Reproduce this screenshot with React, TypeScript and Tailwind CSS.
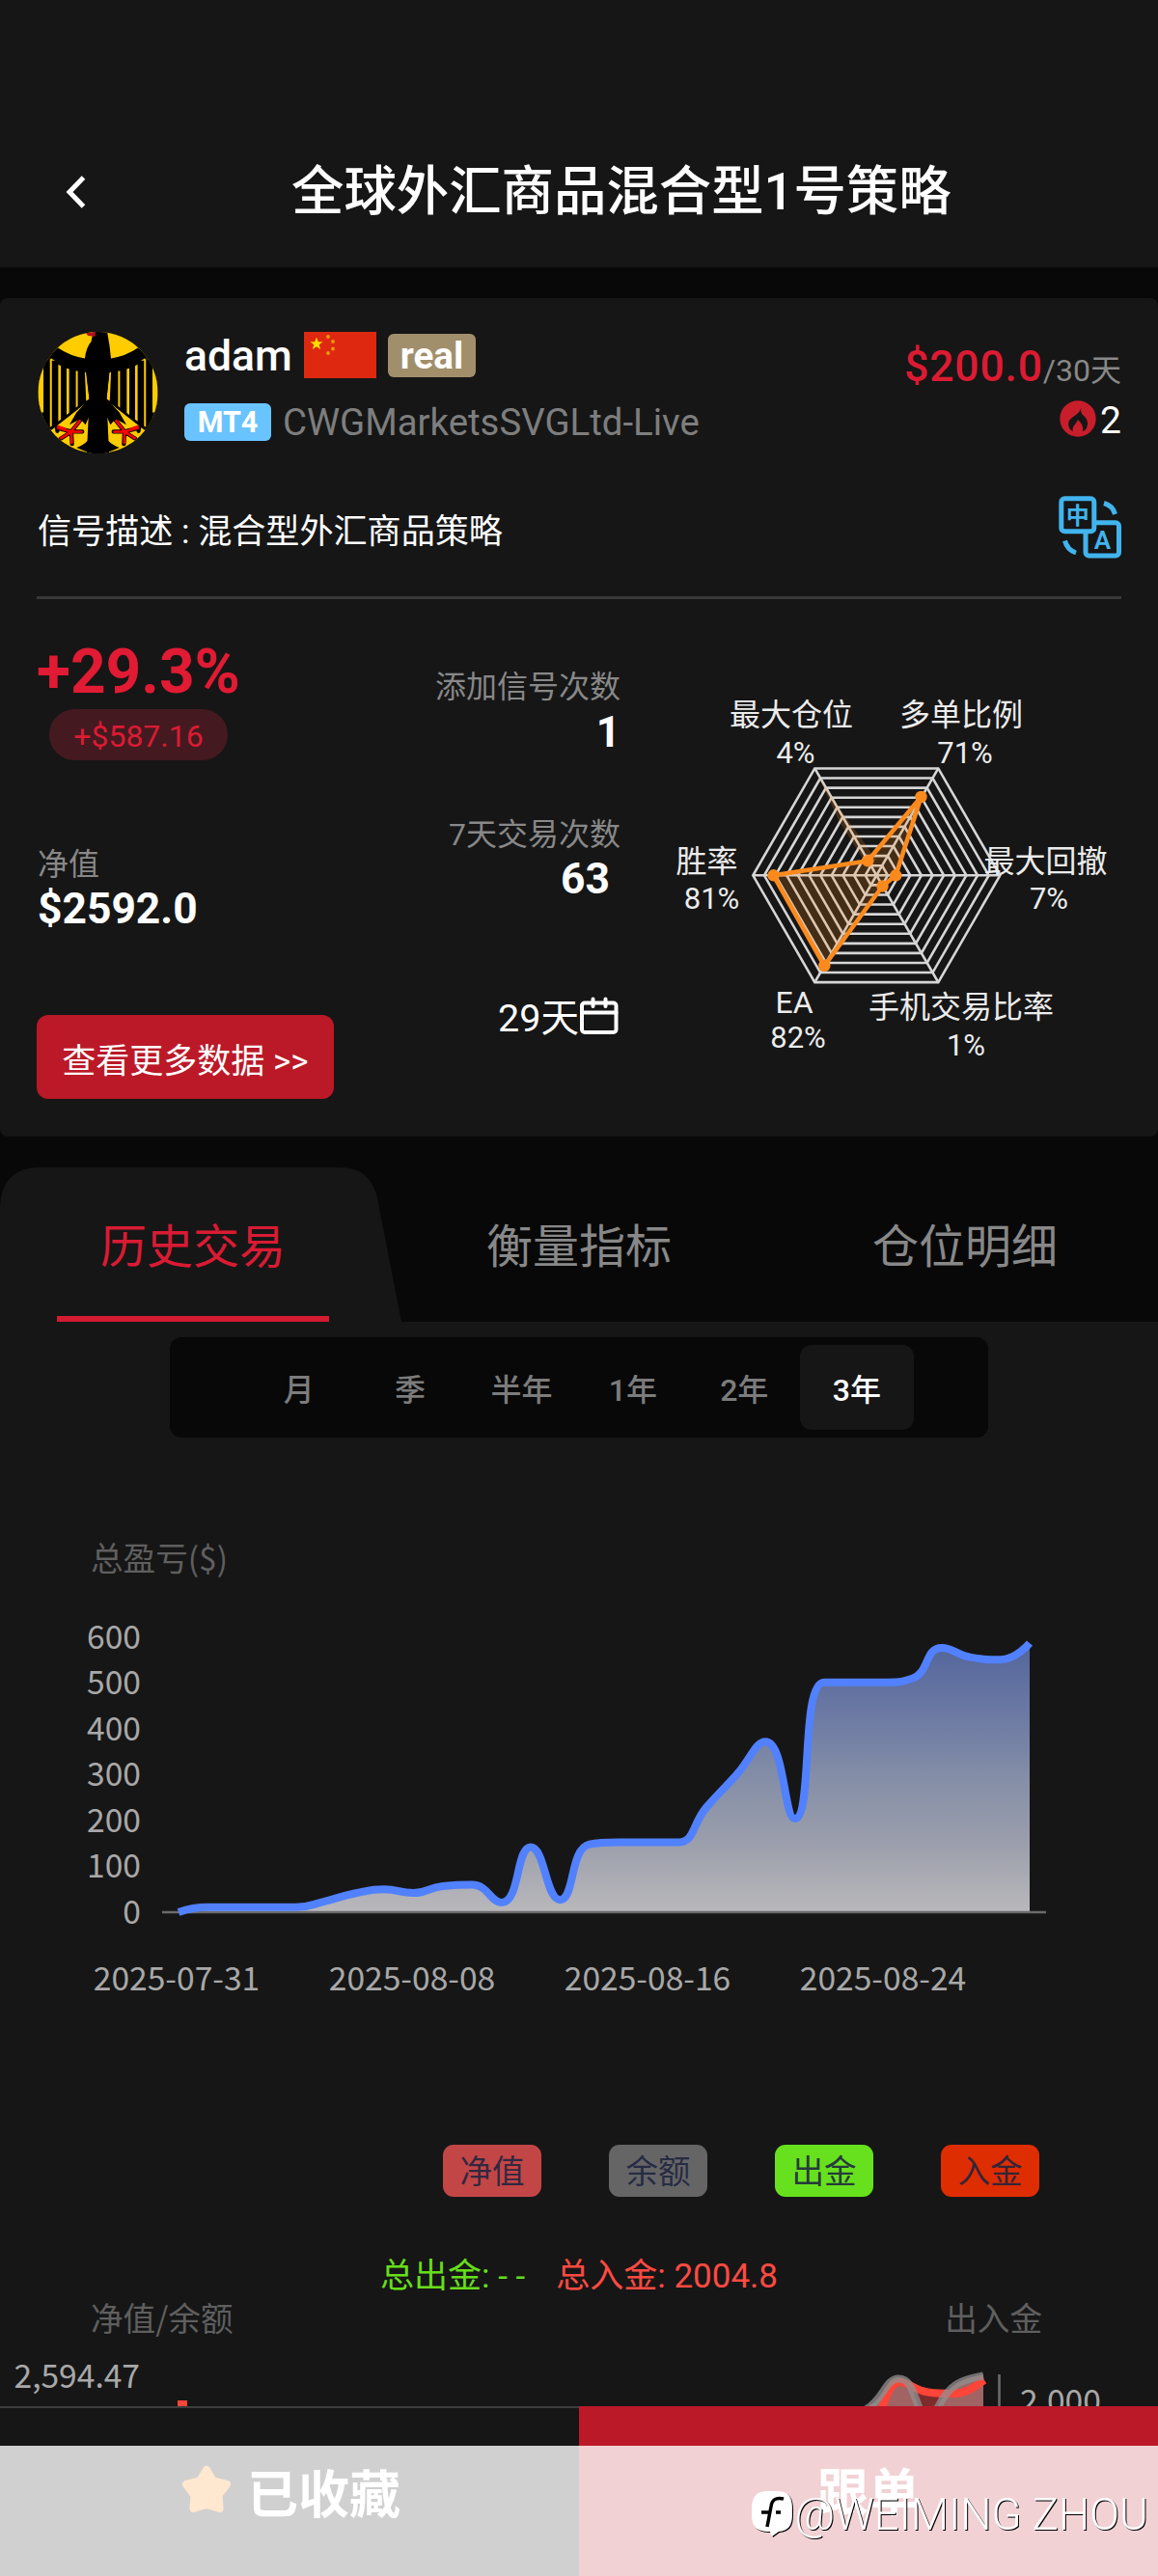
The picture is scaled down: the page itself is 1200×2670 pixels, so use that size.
import { useState } from 'react';

type Point = [number, number];

const profit = [
  0, 11, 11, 11, 11, 24, 41, 50, 42, 57, 60, 21, 142, 27, 148, 152.5, 152.5, 152.5, 230, 299, 372, 204, 501.5,
  501.5, 501.5, 510, 577, 556, 551, 587.16,
];

const yTicks = ['600', '500', '400', '300', '200', '100', '0'];
const dates = ['2025-07-31', '2025-08-08', '2025-08-16', '2025-08-24'];
const tabs = ['历史交易', '衡量指标', '仓位明细'];
const ranges = ['月', '季', '半年', '1年', '2年', '3年'];

const legend = [
  { label: '净值', color: 'bg-[#c34646]' },
  { label: '余额', color: 'bg-[#666566]' },
  { label: '出金', color: 'bg-[#67e11d]' },
  { label: '入金', color: 'bg-[#de2d00]' },
];

const radarLabels = [
  { name: '最大仓位', value: '4%', x: 820, y: 752, vx: 824.5, vy: 790.5 },
  { name: '多单比例', value: '71%', x: 996, y: 752, vx: 1000, vy: 790.5 },
  { name: '胜率', value: '81%', x: 732.5, y: 904, vx: 737.5, vy: 942 },
  { name: '最大回撤', value: '7%', x: 1083.5, y: 904, vx: 1087, vy: 942 },
  { name: 'EA', value: '82%', x: 823, y: 1050, vx: 827, vy: 1086 },
  { name: '手机交易比率', value: '1%', x: 996, y: 1055, vx: 1001, vy: 1094 },
];

const clamp = (v: number, a: number, b: number) => Math.max(Math.min(v, Math.max(a, b)), Math.min(a, b));

// bezier smoothing that never overshoots the neighbouring points
function smoothPath(pts: Point[], smooth = 0.5) {
  let d = `M${pts[0][0]} ${pts[0][1]}`;
  let [c0x, c0y] = pts[0];
  for (let i = 1; i < pts.length; i++) {
    const [px, py] = pts[i - 1];
    const [x, y] = pts[i];
    let c1x = x;
    let c1y = y;
    let nx = x;
    let ny = y;
    if (i < pts.length - 1) {
      const [qx, qy] = pts[i + 1];
      const lenPrev = Math.hypot(x - px, y - py);
      const lenNext = Math.hypot(qx - x, qy - y);
      const ratio = lenNext / (lenNext + lenPrev);
      nx = clamp(x + (qx - px) * smooth * ratio, x, qx);
      ny = clamp(y + (qy - py) * smooth * ratio, y, qy);
      c1x = clamp(x - ((nx - x) * lenPrev) / lenNext, px, x);
      c1y = clamp(y - ((ny - y) * lenPrev) / lenNext, py, y);
      nx = x + ((x - c1x) * lenNext) / lenPrev;
      ny = y + ((y - c1y) * lenNext) / lenPrev;
    }
    d += `C${c0x} ${c0y} ${c1x} ${c1y} ${x} ${y}`;
    c0x = nx;
    c0y = ny;
  }
  return d;
}

function hexagon(cx: number, cy: number, r: number) {
  return [0, 60, 120, 180, 240, 300]
    .map((a) => `${cx + r * Math.cos((a * Math.PI) / 180)},${cy + r * Math.sin((a * Math.PI) / 180)}`)
    .join(' ');
}

function EagleHalf() {
  return (
    <g>
      <path d="M62 50Q100 76 146 83L152 84L146 118Q90 118 40 82L38 308L0 308L0 100Z" />
      <path d="M0 96L17 96V252H0Z" fill="#ffcc00" />
      <path d="M17 90H187V220H160L38 310L17 270Z" />
      <path
        d="M37 84L43 88V294L37 298ZM63 102L71 106V274L63 280ZM89 114L97 116V253L89 259ZM118 122H124V232L118 237ZM146 126L151 127L160 210L150 216Z"
        fill="#ffcc00"
      />
      <path d="M38 310L160 214L162 340L120 362L50 335Z" fill="#ffcc00" />
      <path d="M187 205H164L120 252L98 290L132 272L148 290L158 268L166 272V310Q166 345 120 362Q150 376 187 385Z" />
      <g stroke="#000" strokeWidth={13} strokeLinecap="round">
        <path d="M58 300L104 312M70 334L104 312M106 350L104 312M138 312L104 312M132 276L100 316M60 300V310" />
      </g>
      <g stroke="#f00" strokeWidth={8} strokeLinecap="round">
        <path d="M62 300L104 312M72 332L104 312M105 346L104 312M136 312L104 312M130 278L100 316M64 296L84 304" />
      </g>
    </g>
  );
}

function Avatar() {
  return (
    <svg width={125} height={126} viewBox="0 0 374 380" className="ml-px shrink-0">
      <defs>
        <clipPath id="avatar">
          <ellipse cx={187} cy={190} rx={187} ry={190} />
        </clipPath>
      </defs>
      <g clipPath="url(#avatar)">
        <rect width={374} height={380} fill="#ffcc00" />
        <EagleHalf />
        <g transform="translate(374 0) scale(-1 1)">
          <EagleHalf />
        </g>
        <path d="M172 0H216Q224 40 228 86L222 130L214 210L222 380H152L160 210L150 130L146 83Q150 48 166 30Z" />
        <path d="M148 2L180 0L178 14L156 12Z" fill="#b5121b" />
      </g>
    </svg>
  );
}

function Flag() {
  return (
    <svg width={75} height={48} viewBox="0 0 75 48" className="ml-[14px] shrink-0">
      <rect width={75} height={48} fill="#de2910" />
      <path d="M13 5.5L14.7 10.2H19.5L15.7 13.2L17.1 18L13 15.2L8.9 18L10.3 13.2L6.5 10.2H11.3Z" fill="#ffde00" />
      <g fill="#e89a10">
        <circle cx={25} cy={5} r={1.9} />
        <circle cx={30} cy={10} r={1.9} />
        <circle cx={30} cy={17.5} r={1.9} />
        <circle cx={25} cy={22} r={1.9} />
      </g>
    </svg>
  );
}

function FlameIcon() {
  return (
    <svg width={38} height={38} viewBox="596 257 114 114">
      <circle cx={653} cy={314} r={56} fill="#c81e2b" />
      <path
        d="M663 280C661 292 664 299 672 306C680 313 684 322 683 332C682 343 676 351 667 354C671 343 668 330 652 317C651 327 638 334 637 345C636 350 637 352 638 354C628 349 622 338 624 326C626 308 657 304 663 280Z"
        fill="#161616"
      />
    </svg>
  );
}

function TranslateIcon() {
  return (
    <svg width={66} height={66} viewBox="0 0 66 66" className="-mr-px" fill="none" stroke="#41b4ee" strokeWidth={5}>
      <rect x={2.8} y={2.8} width={34} height={34} rx={3.5} />
      <path d="M38 27.8H59a3.5 3.5 0 0 1 3.5 3.5V58.5a3.5 3.5 0 0 1 -3.5 3.5H31.5a3.5 3.5 0 0 1 -3.5 -3.5V38" />
      <path d="M47 7.5Q56 10 58.5 19M6.5 46.5Q9 56 18 59" />
      <text x={19.8} y={28.5} textAnchor="middle" fontSize={24} fontWeight={700} fill="#41b4ee" stroke="none">
        中
      </text>
      <text x={45.5} y={54.5} textAnchor="middle" fontSize={26} fontWeight={600} fill="#41b4ee" stroke="none">
        A
      </text>
    </svg>
  );
}

function CalendarIcon() {
  return (
    <svg
      width={40}
      height={39}
      viewBox="0 0 40 39"
      className="mr-[2px]"
      fill="none"
      stroke="#fff"
      strokeWidth={4}
      strokeLinecap="round"
    >
      <rect x={2} y={6.5} width={35.5} height={30.5} rx={3} />
      <path d="M2 16.5H37.5M13.5 2.5V10M26.5 2.5V10" />
    </svg>
  );
}

function Radar() {
  const cx = 908.3;
  const cy = 907.3;
  const step = 128 / 11;
  const pts: Point[] = [
    [899.3, 892.3],
    [954.5, 826],
    [928.3, 907.3],
    [914.5, 918.5],
    [854.3, 1001],
    [801.5, 907.3],
  ];
  return (
    <svg width={480} height={400} viewBox="700 706 480 400" className="shrink-0">
      <g fill="none" stroke="#d6d6d6" strokeWidth={2.6}>
        {Array.from({ length: 11 }, (_, i) => (
          <polygon key={i} points={hexagon(cx, cy, step * (i + 1))} />
        ))}
        {[0, 60, 120].map((a) => {
          const dx = 128 * Math.cos((a * Math.PI) / 180);
          const dy = 128 * Math.sin((a * Math.PI) / 180);
          return <line key={a} x1={cx - dx} y1={cy - dy} x2={cx + dx} y2={cy + dy} />;
        })}
      </g>
      <polygon points="847,803 870,838 908,891 899,898 869,850" fill="#ff8c1e" fillOpacity={0.2} />
      <polygon
        points={pts.map((p) => p.join(',')).join(' ')}
        fill="#ff8c1e"
        fillOpacity={0.2}
        stroke="#fb8a1d"
        strokeWidth={4.6}
        strokeLinejoin="round"
      />
      {pts.map(([x, y]) => (
        <circle key={x} cx={x} cy={y} r={6.2} fill="#fb8a1d" />
      ))}
      <g fill="#ececec" textAnchor="middle">
        {radarLabels.map((l) => (
          <g key={l.name}>
            <text x={l.x} y={l.y} fontSize={32}>
              {l.name}
            </text>
            <text x={l.vx} y={l.vy} fontSize={31}>
              {l.value}
            </text>
          </g>
        ))}
      </g>
    </svg>
  );
}

function ProfitChart() {
  const pts = profit.map((v, i): Point => [185 + (i * 882) / 29, 1982 - v * 0.475]);
  const line = smoothPath(pts);
  return (
    <svg width={1200} height={320} viewBox="0 1680 1200 320" className="col-start-1 row-start-1">
      <defs>
        <linearGradient id="area" x1="0" y1="1703" x2="0" y2="1982" gradientUnits="userSpaceOnUse">
          <stop offset="0" stopColor="#53659b" />
          <stop offset="0.25" stopColor="#6a78a3" />
          <stop offset="0.5" stopColor="#848ea7" />
          <stop offset="0.75" stopColor="#9c9fac" />
          <stop offset="1" stopColor="#b9b8bb" />
        </linearGradient>
      </defs>
      <path d={`${line}V1982H185Z`} fill="url(#area)" />
      <path d="M168 1982H1084" stroke="#6b6b6e" strokeWidth={2.6} />
      <path d={line} fill="none" stroke="#5181ff" strokeWidth={8} strokeLinejoin="bevel" />
    </svg>
  );
}

function EquityChart() {
  return (
    <svg width={1200} height={54} viewBox="0 2440 1200 54" className="block">
      <path
        d="M914 2494C922 2474 926 2469 933 2469C942 2469 948 2478 962 2479.5C972 2481 978 2481 988 2481C1002 2481 1010 2474 1019 2467V2494Z"
        fill="#7d2b2b"
      />
      <path
        d="M900 2494C916 2486 918 2464 931 2464C944 2464 946 2480 952 2494ZM972 2494C984 2470 996 2466 1019 2461V2494Z"
        fill="#a06464"
      />
      <path
        d="M914 2496C922 2474 926 2469 933 2469C942 2469 948 2478 962 2479.5C972 2481 978 2481 988 2481C1002 2481 1010 2474 1020 2467"
        fill="none"
        stroke="#ff4438"
        strokeWidth={8}
      />
      <path
        d="M898 2497C916 2486 918 2465.5 931 2465.5C944 2465.5 946 2480 953 2497M971 2497C984 2470 996 2467 1019 2462.500"
        fill="none"
        stroke="#909090"
        strokeOpacity={0.75}
        strokeWidth={8}
      />
      <path d="M1035.5 2461V2494" stroke="#6b6b6e" strokeWidth={2.6} />
      <rect x={184} y={2488} width={10} height={6} fill="#ff4438" />
      <g fill="#a8a8a8" fontSize={33.6} className="font-['Noto_Sans_CJK_SC',sans-serif]">
        <text x={145} y={2474.5} textAnchor="end">
          2,594.47
        </text>
        <text x={1057} y={2501}>
          2,000
        </text>
      </g>
    </svg>
  );
}

export default function App() {
  const [tab, setTab] = useState(0);
  const [range, setRange] = useState('3年');

  return (
    <div className="relative flex h-[2670px] w-[1200px] flex-col overflow-hidden bg-[#161616] font-[Roboto,'Noto_Sans_CJK_SC',sans-serif] leading-none text-white">
      {/* Header */}
      <header className="flex h-[277px] shrink-0 items-start pt-[172px] pl-[67px]">
        <svg width={24} height={36} viewBox="0 0 24 36" className="mt-[9px]" fill="none" stroke="#fff" strokeWidth={5}>
          <path d="M19.5 3L5 18L19.5 33" />
        </svg>
        <h1 className="ml-[211px] text-[54.4px] font-medium whitespace-nowrap">全球外汇商品混合型1号策略</h1>
      </header>

      <div className="bg-[#080808] pt-8">
        {/* Signal card */}
        <section className="flex h-[869px] flex-col rounded-lg bg-[#161616] px-[38px] pt-[35px]">
          <div className="flex h-[126px]">
            <Avatar />
            <div className="ml-[27px]">
              <div className="flex h-12 items-center">
                <span className="w-[110px] pt-[2px] text-[44.5px] font-medium">adam</span>
                <Flag />
                <span className="ml-3 flex h-[45px] w-[91px] items-center justify-center rounded-md bg-[#a18f6b] pt-[2px] text-[38.5px] font-bold">
                  real
                </span>
              </div>
              <div className="mt-[26px] flex h-[39px] items-center">
                <span className="flex h-[39px] w-[90px] items-center justify-center rounded-md bg-[#69c3ff] pt-[2px] text-[30.5px] font-bold">
                  MT4
                </span>
                <span className="ml-[12px] pt-[2px] text-[38.4px] text-[#7e7e7e]">CWGMarketsSVGLtd-Live</span>
              </div>
            </div>
            <div className="ml-auto flex flex-col items-end pt-[14px]">
              <div className="text-[#888]">
                <span className="text-[44.5px] font-medium tracking-[0.8px] text-[#dc1b33]">$200.0</span>
                <span className="text-[32px]">/30天</span>
              </div>
              <div className="mt-[12px] flex items-start">
                <FlameIcon />
                <span className="ml-1 pt-[2px] text-[39px]">2</span>
              </div>
            </div>
          </div>

          <div className="mt-[44px] flex h-[66px] items-start justify-between">
            <p className="pt-[20px] pl-px text-[35.1px]">信号描述 : 混合型外汇商品策略</p>
            <TranslateIcon />
          </div>
          <div className="mt-[38px] h-[3px] bg-[#383838]" />

          <div className="flex">
            <div className="w-[308px] pt-[44px]">
              <p className="text-[64px] font-bold text-[#e01b33]">+29.3%</p>
              <p className="mt-[6px] ml-[13px] flex h-[53px] w-[185px] items-center justify-center rounded-full bg-[#441a20] pt-[2px] text-[32px] text-[#dc1b33]">
                +$587.16
              </p>
              <p className="mt-[92px] pl-px text-[32px] text-[#888]">净值</p>
              <p className="mt-[8px] pl-px text-[44.4px] font-bold">$2592.0</p>
              <button className="mt-[88px] flex h-[87px] w-[308px] items-center justify-center rounded-xl bg-[#bb1928] pt-[10px] text-[35px] whitespace-nowrap">
                查看更多数据 &gt;&gt;
              </button>
            </div>
            <div className="flex w-[297px] flex-col items-end pt-[75px]">
              <p className="text-[32px] text-[#888]">添加信号次数</p>
              <p className="mt-[9px] text-[44px] font-bold">1</p>
              <p className="mt-[68px] text-[32px] text-[#888]">7天交易次数</p>
              <p className="mt-[8px] mr-[11px] text-[44.4px] font-bold">63</p>
              <div className="mt-[100px] flex items-start">
                <span className="mr-px pt-[3px] text-[39.5px]">29天</span>
                <CalendarIcon />
              </div>
            </div>
            <div className="mt-[85px] -mr-[56px] ml-[57px]">
              <Radar />
            </div>
          </div>
        </section>

        {/* Tabs */}
        <nav className="mt-8 grid h-[160px] grid-cols-[400px_400px_400px]">
          <svg width={416} height={160} viewBox="0 0 416 160" className="col-start-1 row-start-1">
            <path d="M0 160V44Q0 0 42 0H352Q384 0 391 32L416 160Z" fill="#161616" />
          </svg>
          {tabs.map((t, i) => (
            <button
              key={t}
              onClick={() => setTab(i)}
              className={
                i === 0
                  ? 'z-10 col-start-1 row-start-1 flex flex-col items-center justify-between pt-[59px] text-[48px] ' +
                    (tab === i ? 'text-[#d91b33]' : 'text-[#888]')
                  : 'row-start-1 flex flex-col items-center justify-between pt-[59px] text-[48px] ' +
                    (tab === i ? 'text-[#d91b33]' : 'text-[#888]')
              }
            >
              {t}
              {tab === i && <span className="h-[6px] w-[282px] bg-[#d41b31]" />}
            </button>
          ))}
        </nav>
      </div>

      {/* Range selector */}
      <div className="mt-4 ml-[176px] flex h-[104px] w-[848px] shrink-0 items-center rounded-xl bg-[#080808] pl-[76px]">
        {ranges.map((r) => (
          <button
            key={r}
            onClick={() => setRange(r)}
            className={
              r === range
                ? 'h-[88px] w-[118px] rounded-xl bg-[#161616] pt-[5px] text-[32px] font-medium text-white'
                : 'h-[88px] w-[115.4px] pt-[5px] text-[32px] font-medium text-[#7c7c7c]'
            }
          >
            {r}
          </button>
        ))}
      </div>

      {/* Profit chart */}
      <section className="font-['Noto_Sans_CJK_SC',sans-serif] text-[33.6px] text-[#a8a8a8]">
        <h2 className="mt-[107px] ml-[94px] text-[#5f5f5f]">总盈亏($)</h2>
        <div className="mt-[49px] grid h-[320px] w-[1200px]">
          <div className="col-start-1 row-start-1 -mt-[2px] w-[146px] text-right">
            {yTicks.map((t) => (
              <p key={t} className="h-[47.5px] leading-[34px]">
                {t}
              </p>
            ))}
          </div>
          <ProfitChart />
        </div>
        <div className="mt-[32px] ml-[61px] flex">
          {dates.map((d) => (
            <span key={d} className="w-[244px] text-center">
              {d}
            </span>
          ))}
        </div>
      </section>

      {/* Equity / balance */}
      <div className="mt-[158px] ml-[459px] flex gap-[70px]">
        {legend.map((l) => (
          <button
            key={l.label}
            className={`flex h-[54px] w-[102px] items-center justify-center rounded-[11px] pt-[3px] text-[33.6px] text-[#1d2440]/90 ${l.color}`}
          >
            {l.label}
          </button>
        ))}
      </div>
      <div className="mt-[65px] flex justify-center gap-[32px] text-[35px]">
        <span className="text-[#67dd1a]">总出金: - -</span>
        <span className="text-[#ff4a42]">总入金: 2004.8</span>
      </div>
      <div className="mt-[8px] flex justify-between pr-[120px] pl-[94px] font-['Noto_Sans_CJK_SC',sans-serif] text-[33.6px] text-[#5f5f5f]">
        <span>净值/余额</span>
        <span>出入金</span>
      </div>
      <div className="mt-auto mb-[176px] h-[54px]">
        <EquityChart />
      </div>

      {/* Bottom action bar */}
      <footer className="absolute inset-x-0 bottom-0 grid h-[176px] grid-cols-2 text-[53px] font-bold">
        <button className="flex items-start border-t-2 border-[#3d3d3d] bg-[#161616] pt-[59px] pl-[187px]">
          <svg width={54} height={52} viewBox="0 0 54 52">
            <path
              d="M27 5L34 16.5L48 20L39.5 31L40.5 45L27 41L13.5 45L14.5 31L6 20L20 16.5Z"
              fill="#ff8c10"
              stroke="#ff8c10"
              strokeWidth={8}
              strokeLinejoin="round"
            />
          </svg>
          <span className="ml-[15px] pt-[6px]">已收藏</span>
        </button>
        <button className="flex items-start justify-center bg-[#bb1928] pt-[65px]">跟单</button>
      </footer>
      <div className="absolute inset-x-0 bottom-0 h-[135px] bg-white/80" />

      {/* Watermark */}
      <div className="absolute right-[10px] bottom-[38px] flex items-center [filter:drop-shadow(1.5px_1.5px_0_#000)]">
        <svg width={44} height={50} viewBox="0 0 44 50">
          <path
            d="M16 0H26C38 0 42 6 42 18V24C42 36 38 41 28 42L21 47L19 42C5 42 0 37 0 24V18C0 6 5 0 16 0Z"
            fill="#fff"
          />
          <path d="M33 8C25 6 21 9 20 16L16 37M10 22H20M25 22H30" fill="none" stroke="#000" strokeWidth={3.5} />
        </svg>
        <span className="text-[45.5px] font-light">@WEIMING ZHOU</span>
      </div>
    </div>
  );
}
